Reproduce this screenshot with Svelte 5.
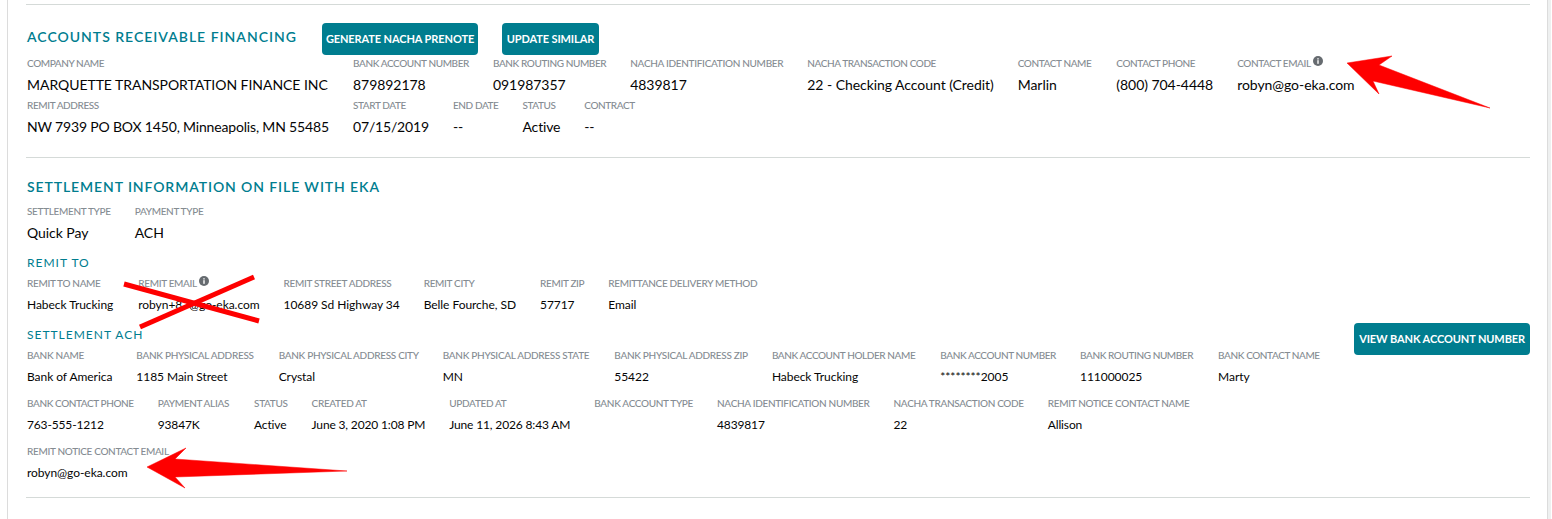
<script lang="ts">
    const arRow1 = [
        { label: 'Company Name', value: 'MARQUETTE TRANSPORTATION FINANCE INC' },
        { label: 'Bank Account Number', value: '879892178' },
        { label: 'Bank Routing Number', value: '091987357' },
        { label: 'NACHA Identification Number', value: '4839817' },
        { label: 'NACHA Transaction Code', value: '22 - Checking Account (Credit)' },
        { label: 'Contact Name', value: 'Marlin' },
        { label: 'Contact Phone', value: '(800) 704-4448' },
        { label: 'Contact Email', value: 'robyn@go-eka.com', info: true }
    ];
    const arRow2 = [
        { label: 'Remit Address', value: 'NW 7939 PO BOX 1450, Minneapolis, MN 55485' },
        { label: 'Start Date', value: '07/15/2019' },
        { label: 'End Date', value: '--' },
        { label: 'Status', value: 'Active' },
        { label: 'Contract', value: '--' }
    ];
    const settlement = [
        { label: 'Settlement Type', value: 'Quick Pay' },
        { label: 'Payment Type', value: 'ACH' }
    ];
    const remitTo = [
        { label: 'Remit To Name', value: 'Habeck Trucking' },
        { label: 'Remit Email', value: 'robyn+87@go-eka.com', info: true },
        { label: 'Remit Street Address', value: '10689 Sd Highway 34' },
        { label: 'Remit City', value: 'Belle Fourche, SD' },
        { label: 'Remit Zip', value: '57717' },
        { label: 'Remittance Delivery Method', value: 'Email' }
    ];
    const ach1 = [
        { label: 'Bank Name', value: 'Bank of America' },
        { label: 'Bank Physical Address', value: '1185 Main Street' },
        { label: 'Bank Physical Address City', value: 'Crystal' },
        { label: 'Bank Physical Address State', value: 'MN' },
        { label: 'Bank Physical Address Zip', value: '55422' },
        { label: 'Bank Account Holder Name', value: 'Habeck Trucking' },
        { label: 'Bank Account Number', value: '********2005' },
        { label: 'Bank Routing Number', value: '111000025' },
        { label: 'Bank Contact Name', value: 'Marty' }
    ];
    const ach2 = [
        { label: 'Bank Contact Phone', value: '763-555-1212' },
        { label: 'Payment Alias', value: '93847K' },
        { label: 'Status', value: 'Active' },
        { label: 'Created At', value: 'June 3, 2020 1:08 PM' },
        { label: 'Updated At', value: 'June 11, 2026 8:43 AM' },
        { label: 'Bank Account Type', value: '' },
        { label: 'NACHA Identification Number', value: '4839817' },
        { label: 'NACHA Transaction Code', value: '22' },
        { label: 'Remit Notice Contact Name', value: 'Allison' }
    ];
    const ach3 = [{ label: 'Remit Notice Contact Email', value: 'robyn@go-eka.com' }];
</script>

{#snippet fields(list, cls)}
    <div class="fields {cls}">
        {#each list as f}
            <div class="field">
                <div class="label">
                    {f.label}{#if f.info}<svg class="info" viewBox="0 0 10 10" aria-hidden="true"><circle cx="5" cy="5" r="5" fill="#666b70" /><rect x="4.3" y="4.2" width="1.4" height="3.6" fill="#fff" /><rect x="4.3" y="2.2" width="1.4" height="1.3" fill="#fff" /></svg>{/if}
                </div>
                <div class="value">{f.value}</div>
            </div>
        {/each}
    </div>
{/snippet}

<div class="page">
    <section class="section ar">
        <div class="title-row">
            <h2>Accounts Receivable Financing</h2>
            <button class="btn">Generate NACHA Prenote</button>
            <button class="btn">Update Similar</button>
        </div>
        {@render fields(arRow1, 'ar1')}
        {@render fields(arRow2, 'ar2')}
    </section>

    <section class="section settle">
        <h2 class="settle-title">Settlement Information on File with EKA</h2>
        {@render fields(settlement, 'type')}
        <h3>Remit To</h3>
        {@render fields(remitTo, 'small remit')}
        <div class="ach-head">
            <h3>Settlement ACH</h3>
            <button class="btn view">View Bank Account Number</button>
        </div>
        {@render fields(ach1, 'small ach ach1')}
        {@render fields(ach2, 'small ach ach2')}
        {@render fields(ach3, 'small ach')}
    </section>

    <svg class="marks" viewBox="0 0 1552 519" aria-hidden="true">
        <polygon fill="#fe0000" stroke="#fe0000" stroke-width="0.5" stroke-linejoin="round" points="1347,63 1392,56 1379,65 1490,108 1373,81 1379,94" />
        <polygon fill="#fe0000" stroke="#fe0000" stroke-width="0.5" stroke-linejoin="round" points="147,467 186,448 175,459 347,471 175,477 185,488" />
        <line x1="124" y1="284" x2="259" y2="321" stroke="#fe0000" stroke-width="5" />
        <line x1="140" y1="327" x2="254" y2="277" stroke="#fe0000" stroke-width="5" />
    </svg>
</div>

<style>
    :global(body) {
        background: #fff;
    }
    .page {
        position: relative;
        box-sizing: border-box;
        width: 1541px;
        height: 519px;
        margin-left: 7px;
        padding: 4px 17px 0 19px;
        border-left: 1px solid #dcdcdc;
        border-right: 1px solid #dcdcdc;
        box-shadow: 3px 0 0 #eef0f0;
        font-family: Lato, sans-serif;
        color: #050505;
    }
    .section {
        margin-left: -1px;
        padding-left: 1px;
        border-top: 1px solid #d5dad8;
    }
    .ar {
        height: 153px;
        padding-top: 18px;
        box-sizing: border-box;
    }
    .settle {
        height: 341px;
        box-sizing: border-box;
        padding-top: 20px;
        border-bottom: 1px solid #d5dad8;
    }
    .title-row {
        display: flex;
        align-items: flex-start;
        gap: 24px;
        margin-bottom: 2px;
    }
    h2 {
        margin: 0;
        font-size: 14px;
        font-weight: 600;
        letter-spacing: 0.99px;
        text-transform: uppercase;
        color: #007d8f;
        line-height: 17px;
    }
    .title-row h2 {
        padding: 5px 1px 0 0;
    }
    .settle-title {
        margin-bottom: 10px;
        letter-spacing: 0.9px;
    }
    h3 {
        margin: 15px 0 7px;
        font-size: 12px;
        font-weight: 400;
        letter-spacing: 1px;
        text-transform: uppercase;
        color: #007d8f;
        line-height: 14px;
    }
    .btn {
        height: 32px;
        padding: 0 4px 1px;
        border: none;
        border-radius: 4px;
        background: #007d8f;
        color: #fff;
        font-family: Lato, sans-serif;
        font-size: 11px;
        font-weight: 700;
        letter-spacing: -0.1px;
        text-transform: uppercase;
        white-space: nowrap;
    }
    .btn + .btn {
        padding: 0 4.5px 1px;
    }
    .fields {
        display: flex;
        gap: 24px;
        margin-bottom: 6px;
    }
    .ach {
        margin-bottom: 12px;
    }
    .ar1 .field:first-child,
    .ar2 .field:first-child {
        width: 302px;
    }
    .ar1 .field:nth-child(6),
    .remit .field:first-child,
    .ach1 .field:nth-child(even),
    .ach2 .field:nth-child(2) {
        padding-right: 1px;
    }
    .label {
        display: flex;
        align-items: flex-start;
        font-size: 10px;
        font-weight: 500;
        line-height: 12px;
        height: 12px;
        letter-spacing: -0.4px;
        color: #858c92;
        text-transform: uppercase;
        white-space: nowrap;
    }
    .ar1 .field:nth-child(4) .label {
        letter-spacing: -0.31px;
    }
    .small .label,
    .type .label {
        letter-spacing: -0.33px;
    }
    .ach1 .field:nth-child(-n+5) .label {
        letter-spacing: -0.3px;
    }
    .ach1 .field:nth-child(n+6) .label,
    .ach2 .field:first-child .label {
        letter-spacing: -0.41px;
    }
    .info {
        width: 10px;
        height: 10px;
        margin: -1px 0 0 2px;
    }
    .value {
        margin-top: 7px;
        font-size: 14px;
        line-height: 17px;
        min-height: 17px;
        letter-spacing: -0.05px;
        white-space: nowrap;
    }
    .ar2 .value {
        letter-spacing: -0.17px;
    }
    .small .value {
        font-size: 12px;
    }
    .ach2 .value {
        letter-spacing: -0.15px;
    }
    .ach-head {
        display: flex;
        justify-content: space-between;
        align-items: flex-start;
        height: 21px;
        margin-top: 15px;
    }
    .ach-head h3 {
        margin: 0;
    }
    .view {
        margin-top: -5px;
        padding: 0 5px 1px;
    }
    .marks {
        position: absolute;
        top: 0;
        left: -8px;
        width: 1552px;
        height: 519px;
        pointer-events: none;
    }
</style>
